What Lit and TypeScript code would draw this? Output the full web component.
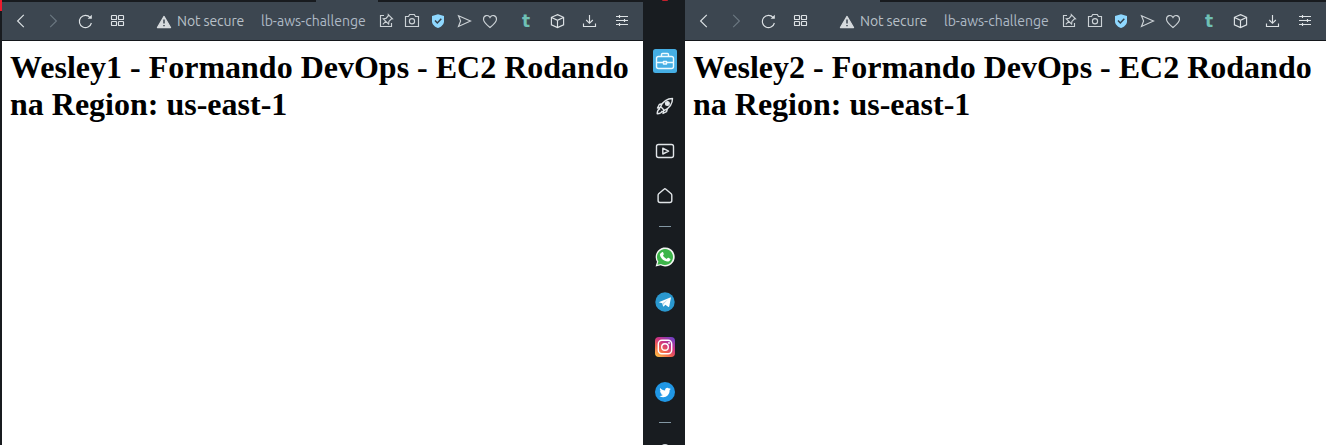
import { LitElement, html, css, svg } from "lit";
import { customElement, property } from "lit/decorators.js";

const icons: Record<string, unknown> = {
  back: svg`<path d="M12.8 3.8 6.6 10l6.2 6.2"/>`,
  forward: svg`<path d="M7.2 3.8 13.4 10l-6.2 6.2"/>`,
  reload: svg`<path d="M15.2 6.6A6.1 6.1 0 1 0 16.4 12"/><path d="M16.8 3.8v4h-4.2z" fill="currentColor" stroke="none"/>`,
  grid: svg`<rect x="4.5" y="4.5" width="5" height="4" rx=".6"/><rect x="11.5" y="4.5" width="5" height="4" rx=".6"/><rect x="4.5" y="10.5" width="5" height="4" rx=".6"/><rect x="11.5" y="10.5" width="5" height="4" rx=".6"/>`,
  warn: svg`<path d="M10 5.4 16.6 16.6H3.4z" fill="currentColor" stroke="currentColor" stroke-linejoin="round"/><path d="M10 8.6v4M10 13.9v1.4" stroke="#3c4650" stroke-width="1.5"/>`,
  pin: svg`<path d="M8 4.5H4.5v11h11V12"/><path d="m12.3 3.6 4.2 4.2-1.3.2-2.3 2.4-.3 2.7-5.3-5.3 2.7-.4 2.2-2.4zM9.7 10.4l-2.9 2.9"/>`,
  camera: svg`<path d="M3.5 5.5h3l1.2-2h4.6l1.2 2h3v10h-13z"/><circle cx="10" cy="10.2" r="2.6"/>`,
  shield: svg`<path d="M10 3.2 16 5v5.2c0 3.2-2.6 5.4-6 6.9-3.400-1.500-6-3.700-6-6.900V5z" fill="#8fd8ff" stroke="none"/><path d="m7 9.600 2.300 2.400 4-4.200" stroke="#34414c" stroke-width="1.500"/>`,
  send: svg`<path d="M4.500 4.800 16.500 10 4.500 15.500 6.600 10z"/>`,
  heart: svg`<path d="M10 16.500C6.500 13.600 3.500 11.200 3.500 8.200 3.500 4.300 8.200 3.200 10 6.500 11.800 3.200 16.500 4.300 16.500 8.200c0 3-3 5.400-6.500 8.300z"/>`,
  cube: svg`<path d="M9.500 3.600 15.600 6.300v7.500l-6.100 2.700-6.100-2.700V6.300zM3.600 6.500 9.500 9.300l5.900-2.800M9.500 9.300v7"/>`,
  download: svg`<path d="M9.500 4v8M6.200 9l3.300 3.300L12.800 9M3.500 12.500v3h12v-3"/>`,
  sliders: svg`<path d="M4 5.500h12M4 9.500h12M4 13.500h12M7.500 4v3M12.500 8v3M7.500 12v3"/>`,
};

const shortcuts: Record<string, unknown> = {
  briefcase: svg`<rect width="24" height="24" rx="2.500" fill="#45aee4" stroke="none"/><g stroke="#eefaff"><rect x="3.500" y="7.500" width="17" height="12" rx="2"/><path d="M8.500 7V5.500q0-1 1-1h5q1 0 1 1V7M3.500 13.500h7M13.500 13.500h7"/><rect x="10.500" y="12.500" width="3" height="2.500"/></g>`,
  rocket: svg`<path d="M19.500 4.500C14 4.500 10 7.500 7.600 12.600l3.800 3.800C16.500 14 19.500 10 19.500 4.500zM9.200 9.600 6.300 10.500 4.500 14l3.200-.8M14.400 14.800l-.9 2.900-3.500 1.800.8-3.200M7.200 14.500C5 15.500 4.200 17.500 4.200 19.800c2.300 0 4.300-.8 5.300-3"/><circle cx="14.400" cy="9.600" r="1.800" fill="#e9edf0"/>`,
  player: svg`<rect x="3.500" y="5.500" width="17" height="13" rx="2"/><path d="m9.800 9.200 5.800 2.900-5.800 2.900z"/>`,
  home: svg`<path d="M11.900 4.800q.5 0 1 .4l5.300 4.600q.6.600.6 1.400v5.300q0 2-2 2H7.100q-2 0-2-2v-5.300q0-.8.6-1.400L11 5.200q.4-.4.900-.4z"/>`,
  whatsapp: svg`<path d="M2.600 21.500 4 16.700A9.500 9.500 0 1 1 7.600 20.200z" fill="#f4f7f4" stroke="none"/><path d="m4.400 19.700 1-3.200A8 8 0 1 1 8 18.900z" fill="#3db54a" stroke="none"/><path d="M8.700 7.400c.8-.7 1.500-.2 1.800.8.500 1.300.3 1.500-.5 2.400 1 1.800 2 2.700 3.800 3.400.9-1.200 1.200-1.400 2.400-.8 1.500.7 1.500 1 .9 2-1 1.600-3 1.700-5.300.6-2.800-1.400-5-4.300-4.900-6.300 0-.9.900-1.600 1.800-2.100z" fill="#fff" stroke="none"/>`,
  telegram: svg`<circle cx="12" cy="12" r="9.700" fill="#2a98cf" stroke="none"/><path d="m5.700 12.200 11.500-4.800c.5-.2.800.1.700.7L16.300 16.300c-.2.700-.6.900-1.200.5l-2.800-2-1.500 1.600c-.4.300-.7.100-.8-.3l-.8-2.800-3.400-1.100z" fill="#fff" stroke="none"/><path d="m9.600 13.200 5.400-3.600-4.300 4.300-.3 1.700z" fill="#b5d3e5" stroke="none"/>`,
  instagram: svg`<defs><linearGradient id="ig" x1=".1" y1="1" x2=".8" y2="0"><stop offset="0" stop-color="#ffc247"/><stop offset=".35" stop-color="#f2644c"/><stop offset=".65" stop-color="#cb3284"/><stop offset="1" stop-color="#7541c4"/></linearGradient></defs><rect x="2" y="2" width="20" height="20" rx="4" fill="url(#ig)" stroke="none"/><g stroke="#fff" stroke-width="1.400"><rect x="5.300" y="5.300" width="13.400" height="13.400" rx="3.600"/><circle cx="12" cy="12" r="3.300"/></g><circle cx="16" cy="8" r=".9" fill="#fff" stroke="none"/>`,
  twitter: svg`<circle cx="12" cy="12" r="10" fill="#2097e5" stroke="none"/><path d="M17.800 8.700c-.4.200-.8.300-1.300.4.500-.3.800-.7 1-1.300-.5.300-1 .5-1.500.6-1.600-1.600-4.300-.3-3.900 2.100-2-.1-3.700-1-4.900-2.500-.6 1.100-.3 2.500.8 3.200-.4 0-.8-.1-1.100-.3 0 1.200.8 2.100 1.900 2.400-.3.100-.7.100-1.100 0 .3 1 1.200 1.600 2.200 1.700-1 .8-2.200 1.100-3.500 1 5 3.100 10.500-.3 10.200-6 .5-.3.900-.8 1.200-1.300z" fill="#fff" stroke="none"/>`,
};

@customElement("browser-window")
class BrowserWindow extends LitElement {
  @property() heading = "";
  @property({ type: Number }) tabStart = 0;
  @property({ type: Number }) tabWidth = 0;

  static styles = css`
    :host { display: flex; flex-direction: column; width: 641px; height: 445px; background: #fff; }
    .tabs { height: 2px; background: #181b1f; }
    .tab { height: 2px; background: #3c4650; }
    .bar {
      display: flex; align-items: center; box-sizing: border-box; height: 39px; padding-left: 9px;
      background: #3c4650; border-bottom: 1px solid #14171b; color: #dde2e5;
      font: 14px Ubuntu, "Noto Sans", sans-serif; white-space: nowrap;
    }
    svg { display: block; width: 20px; height: 20px; fill: none; stroke: currentColor; stroke-width: 1.15; flex: none; }
    .nav, .actions, .tools { display: flex; }
    .nav, .tools { gap: 12px; }
    .forward { color: #6b7781; }
    .address { display: flex; align-items: center; margin-left: 27px; width: 222px; color: #b9c1c8; }
    .warn { color: #d6dadd; }
    .status { width: 84px; margin-left: 3px; letter-spacing: -0.1px; }
    .url { color: #afbac6; }
    .actions { gap: 6px; color: #ccd2d6; }
    .tools { margin-left: 16px; }
    .tumblr { width: 20px; text-align: center; font: bold 17px/20px "DejaVu Sans", sans-serif; color: #6fc0b5; }
    h1 { margin: 8px; font: bold 32px/37px "Liberation Serif", serif; color: #000; }
  `;

  icon(name: string) {
    return html`<svg class=${name} viewBox="0 0 20 20">${icons[name]}</svg>`;
  }

  render() {
    return html`
      <div class="tabs"><div class="tab" style="width:${this.tabWidth}px;margin-left:${this.tabStart}px"></div></div>
      <div class="bar">
        <div class="nav">${["back", "forward", "reload", "grid"].map((n) => this.icon(n))}</div>
        <div class="address">
          ${this.icon("warn")}<span class="status">Not secure</span><span class="url">lb-aws-challenge</span>
        </div>
        <div class="actions">${["pin", "camera", "shield", "send", "heart"].map((n) => this.icon(n))}</div>
        <div class="tools"><span class="tumblr">t</span>${["cube", "download", "sliders"].map((n) => this.icon(n))}</div>
      </div>
      <h1>${this.heading}</h1>
    `;
  }
}

@customElement("side-bar")
class SideBar extends LitElement {
  static styles = css`
    :host { display: flex; flex-direction: column; align-items: center; width: 42px; height: 445px; overflow: hidden; background: #181c20; }
    .alert { width: 6px; height: 1px; flex: none; margin: 0 0 48px 1px; border-radius: 0 0 3px 3px; background: #c3202c; }
    .group { display: flex; flex-direction: column; flex: none; gap: 21px; margin-left: 2px; }
    svg { display: block; width: 24px; height: 24px; fill: none; stroke: #e1e5e8; stroke-width: 1.4; stroke-linejoin: round; }
    .rule { width: 12px; height: 1px; flex: none; margin: 18px 0 18px 2px; background: #8397a3; }
    .more { width: 8px; height: 8px; flex: none; margin: 3px 0 0 1px; border-radius: 50%; background: #d5dadd; }
  `;

  group(names: string[]) {
    return html`<div class="group">${names.map((n) => html`<svg viewBox="0 0 24 24">${shortcuts[n]}</svg>`)}</div>`;
  }

  render() {
    return html`
      <div class="alert"></div>
      ${this.group(["briefcase", "rocket", "player", "home"])}
      <div class="rule"></div>
      ${this.group(["whatsapp", "telegram", "instagram", "twitter"])}
      <div class="rule"></div>
      <div class="more"></div>
    `;
  }
}

@customElement("app-root")
class AppRoot extends LitElement {
  static styles = css`
    :host { display: flex; width: 1326px; height: 445px; overflow: hidden; }
    .edge { width: 2px; background: #181b1f; }
    .mark { height: 11px; background: #ee1c2e; }
  `;

  render() {
    return html`
      <div class="edge"><div class="mark"></div></div>
      <browser-window heading="Wesley1 - Formando DevOps - EC2 Rodando na Region: us-east-1" .tabStart=${314} .tabWidth=${62}></browser-window>
      <side-bar></side-bar>
      <browser-window heading="Wesley2 - Formando DevOps - EC2 Rodando na Region: us-east-1" .tabStart=${0} .tabWidth=${195}></browser-window>
    `;
  }
}
